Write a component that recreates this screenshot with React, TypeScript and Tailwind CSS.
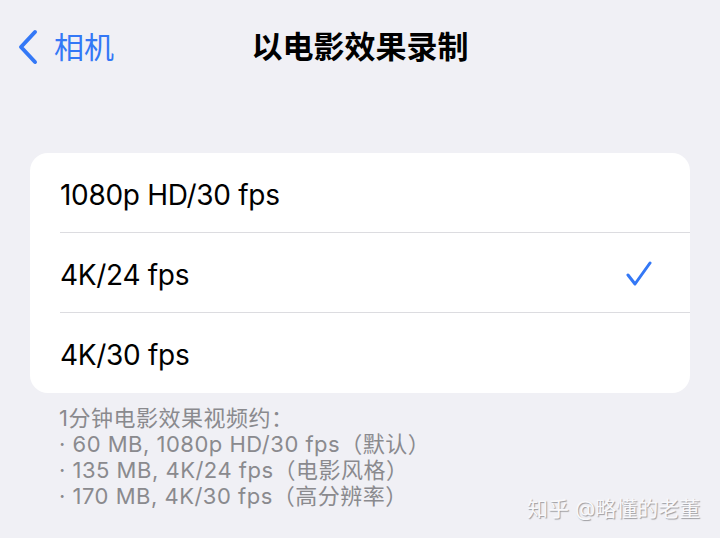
import React from "react";

const options = [
  { label: "1080p HD/30 fps", checked: false },
  { label: "4K/24 fps", checked: true },
  { label: "4K/30 fps", checked: false },
];

const notes = [
  "1分钟电影效果视频约：",
  "· 60 MB, 1080p HD/30 fps（默认）",
  "· 135 MB, 4K/24 fps（电影风格）",
  "· 170 MB, 4K/30 fps（高分辨率）",
];

const font = { fontFamily: 'Inter, "Noto Sans CJK SC", sans-serif' };

export default function App() {
  return (
    <div className="w-[720px] h-[538px] bg-[#f0f0f5] overflow-hidden relative" style={font}>
      {/* nav bar */}
      <div className="h-[95px] flex items-center px-[17px] pb-[2px] relative">
        <div className="flex items-center gap-[15px] text-[#3478f6]">
          <svg width="22" height="36" viewBox="0 0 22 36" fill="none">
            <path d="M18 3L4 18l14 15" stroke="#3478f6" strokeWidth="4" strokeLinecap="round" strokeLinejoin="round" />
          </svg>
          <span className="text-[30px] leading-none">相机</span>
        </div>
        <div className="absolute left-0 right-0 top-0 h-[95px] flex items-center justify-center pb-[2px] pointer-events-none">
          <span className="text-[31px] font-bold text-black leading-none">以电影效果录制</span>
        </div>
      </div>

      <div className="mt-[58px] mx-[30px] bg-white rounded-[18px] overflow-hidden">
        {options.map((o, i) => (
          <div key={o.label} className="pl-[30px]">
            <div
              className={
                "h-[80px] flex items-center justify-between pr-[38px] pt-[4px] " +
                (i < options.length - 1 ? "border-b border-[#dcdce0]" : "")
              }
            >
              <span className="text-[28px] text-black tracking-[-0.3px]">{o.label}</span>
              {o.checked && (
                <svg width="26" height="26" viewBox="0 0 26 26" fill="none" className="-mt-[2px]">
                  <path d="M2 14l7 9L24 2" stroke="#3478f6" strokeWidth="3" strokeLinecap="round" strokeLinejoin="round" />
                </svg>
              )}
            </div>
          </div>
        ))}
      </div>

      <div className="mt-[12px] ml-[59px] text-[22px] leading-[26px] tracking-[0.5px] text-[#8a8a8e]">
        {notes.map((n) => (
          <div key={n} className="whitespace-nowrap">{n}</div>
        ))}
      </div>

      <div
        className="absolute left-[527px] top-[496px] text-[21px] leading-[26px] text-[#f8f8fb]"
        style={{ textShadow: "1px 1px 1px rgba(0,0,0,0.35)" }}
      >
        知乎 @略懂的老董
      </div>
    </div>
  );
}
